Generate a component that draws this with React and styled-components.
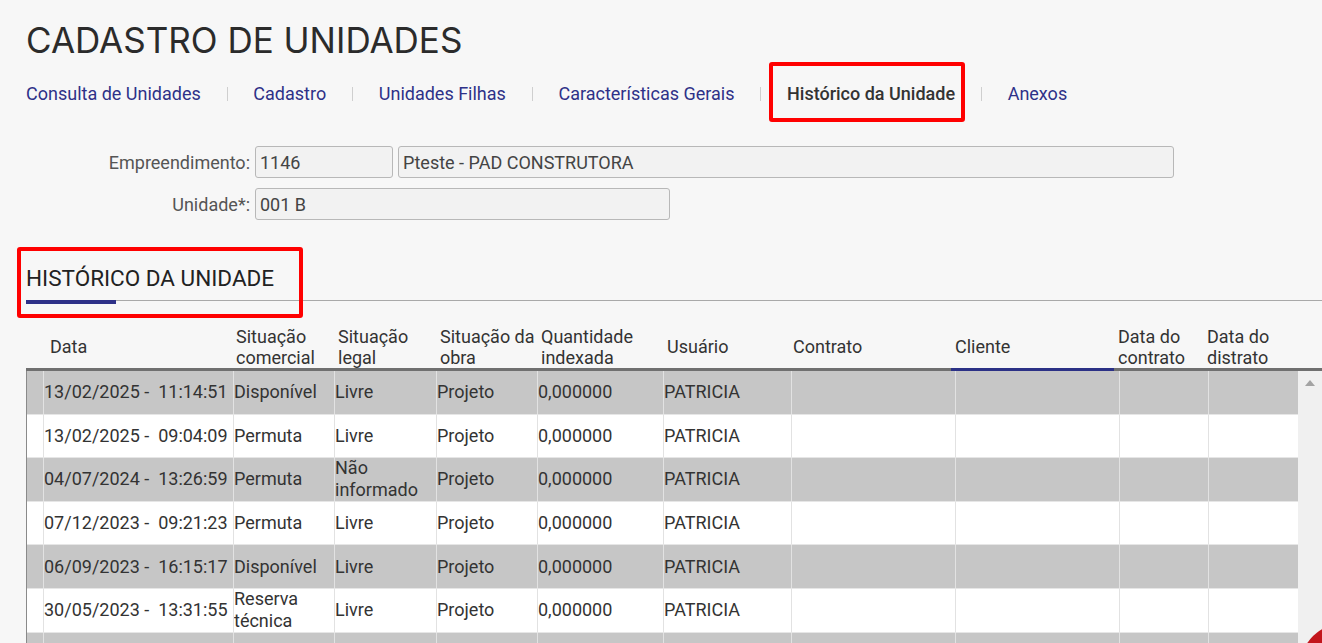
import React from "react";
import styled, { createGlobalStyle } from "styled-components";

const Global = createGlobalStyle`
  html, body { margin: 0; padding: 0; background: #f7f7f7; overflow: hidden; }
  body { font-family: Roboto, "Liberation Sans", sans-serif; color: #333; }
  * { box-sizing: border-box; }
`;

const Page = styled.div`
  height: 100vh;
  overflow: hidden;
  padding-left: 26px;
`;

const Title = styled.h1`
  margin: 0;
  padding-top: 20px;
  font-family: Inter, "Liberation Sans", sans-serif;
  font-weight: 400;
  font-size: 35px;
  line-height: 40px;
  color: #2b2b2b;
`;

const Nav = styled.nav`
  display: flex;
  align-items: center;
  gap: 25.8px;
  height: 60px;
  margin-top: 4px;
`;

const NavItem = styled.a`
  position: relative;
  font-size: 18px;
  line-height: 24px;
  text-decoration: none;
  color: ${(p) => (p.$active ? "#333" : "#2e3188")};
  font-weight: ${(p) => (p.$active ? 500 : 400)};
  white-space: nowrap;
  ${(p) =>
    p.$active &&
    `
    &::after {
      content: "";
      position: absolute;
      left: -18px;
      right: -10px;
      top: -20px;
      bottom: -16px;
      border: 4px solid #ff0000;
      border-radius: 3px;
    }
  `}
`;

const Sep = styled.span`
  width: 1px;
  height: 14px;
  background: #cfcfcf;
`;

const Form = styled.div`
  display: grid;
  grid-template-columns: 224px auto;
  row-gap: 10px;
  column-gap: 5px;
  margin-top: 22px;
  align-items: center;
`;

const Label = styled.label`
  text-align: right;
  font-size: 18px;
  color: #555;
`;

const Fields = styled.div`
  display: flex;
  gap: 5px;
`;

const Input = styled.div`
  width: ${(p) => p.$w}px;
  height: 32px;
  border: 1px solid #b8b8b8;
  border-radius: 3px;
  background: #f2f2f2;
  padding-left: 4px;
  display: flex;
  align-items: center;
  font-size: 18px;
  color: #444;
`;

const SectionHead = styled.div`
  margin-top: 45px;
  border-bottom: 1px solid #a9a9a9;
  position: relative;
  &::after {
    content: "";
    position: absolute;
    left: -9px;
    width: 278px;
    top: -18px;
    height: 63px;
    border: 4px solid #ff0000;
    border-radius: 3px;
  }
`;

const SectionTitle = styled.div`
  font-size: 22.5px;
  line-height: 26px;
  color: #222;
  margin-bottom: 9px;
`;

const SectionBar = styled.div`
  position: relative;
  width: 90px;
  height: 4px;
  background: #2e3188;
  margin-bottom: -4px;
`;

const HeadRow = styled.div`
  margin-top: 19px;
  display: grid;
  grid-template-columns: 20px 186px 102px 102px 101px 126px 126px 162px 163px 89px 95px 24px;
`;

const HeadCell = styled.div`
  height: 51px;
  padding: 5px 0 0 4px;
  display: flex;
  align-items: center;
  font-size: 18px;
  line-height: 21px;
  color: #333;
  white-space: nowrap;
  border-bottom: 3px solid ${(p) => (p.$sorted ? "#2b3186" : "#707070")};
`;

const Body = styled.div`
  display: flex;
  align-items: flex-start;
`;

const Rows = styled.div`
  width: 1272px;
  border-left: 1px solid #8a8a8a;
`;

const Row = styled.div`
  display: grid;
  grid-template-columns: 16px 190px 101px 102px 101px 126px 128px 164px 164px 89px 90px;
  height: 43.6px;
  background: ${(p) => (p.$alt ? "#c6c6c6" : "#ffffff")};
  border-bottom: 1px solid #e6e6e6;
`;

const Cell = styled.div`
  display: flex;
  align-items: center;
  padding-left: 0;
  border-left: 1px solid #e2e2e2;
  font-size: 18px;
  line-height: 22px;
  color: #333;
  white-space: ${(p) => (p.$nowrap ? "pre" : "normal")};
  overflow: hidden;
  &:first-child { border-left: none; }
`;

const ScrollTrack = styled.div`
  width: 24px;
  align-self: stretch;
  background: #f0f0f0;
  display: flex;
  justify-content: center;
  padding-top: 9px;
`;

const ArrowUp = styled.div`
  width: 0;
  height: 0;
  border-left: 5px solid transparent;
  border-right: 5px solid transparent;
  border-bottom: 6px solid #a3a3a3;
`;

const FloatBtn = styled.div`
  position: fixed;
  right: -67px;
  bottom: -69px;
  width: 89px;
  height: 89px;
  border-radius: 50%;
  background: #c3161c;
`;

const headers = [
  "",
  "Data",
  ["Situação", "comercial"],
  ["Situação", "legal"],
  ["Situação da", "obra"],
  ["Quantidade", "indexada"],
  "Usuário",
  "Contrato",
  "Cliente",
  ["Data do", "contrato"],
  ["Data do", "distrato"],
  "",
];

const data = [
  ["13/02/2025 -  11:14:51", "Disponível", "Livre"],
  ["13/02/2025 -  09:04:09", "Permuta", "Livre"],
  ["04/07/2024 -  13:26:59", "Permuta", "Não informado"],
  ["07/12/2023 -  09:21:23", "Permuta", "Livre"],
  ["06/09/2023 -  16:15:17", "Disponível", "Livre"],
  ["30/05/2023 -  13:31:55", "Reserva técnica", "Livre"],
  ["", "", ""],
];

export default function App() {
  return (
    <>
      <Global />
      <Page>
        <Title>CADASTRO DE UNIDADES</Title>
        <Nav>
          <NavItem>Consulta de Unidades</NavItem>
          <Sep />
          <NavItem>Cadastro</NavItem>
          <Sep />
          <NavItem>Unidades Filhas</NavItem>
          <Sep />
          <NavItem>Características Gerais</NavItem>
          <Sep />
          <NavItem $active>Histórico da Unidade</NavItem>
          <Sep />
          <NavItem>Anexos</NavItem>
        </Nav>
        <Form>
          <Label>Empreendimento:</Label>
          <Fields>
            <Input $w={138}>1146</Input>
            <Input $w={776}>Pteste - PAD CONSTRUTORA</Input>
          </Fields>
          <Label>Unidade*:</Label>
          <Fields>
            <Input $w={415}>001 B</Input>
          </Fields>
        </Form>
        <SectionHead>
          <SectionTitle>HISTÓRICO DA UNIDADE</SectionTitle>
          <SectionBar />
        </SectionHead>
        <HeadRow>
          {headers.map((h, i) => (
            <HeadCell key={i} $sorted={h === "Cliente"}>
              {Array.isArray(h) ? (
                <span>
                  {h[0]}
                  <br />
                  {h[1]}
                </span>
              ) : (
                h
              )}
            </HeadCell>
          ))}
        </HeadRow>
        <Body>
          <Rows>
            {data.map((r, i) => (
              <Row key={i} $alt={i % 2 === 0}>
                <Cell />
                <Cell $nowrap>{r[0]}</Cell>
                <Cell>{r[1]}</Cell>
                <Cell>{r[2]}</Cell>
                <Cell>{r[0] ? "Projeto" : ""}</Cell>
                <Cell>{r[0] ? "0,000000" : ""}</Cell>
                <Cell>{r[0] ? "PATRICIA" : ""}</Cell>
                <Cell />
                <Cell />
                <Cell />
                <Cell />
              </Row>
            ))}
          </Rows>
          <ScrollTrack>
            <ArrowUp />
          </ScrollTrack>
        </Body>
      </Page>
      <FloatBtn />
    </>
  );
}
